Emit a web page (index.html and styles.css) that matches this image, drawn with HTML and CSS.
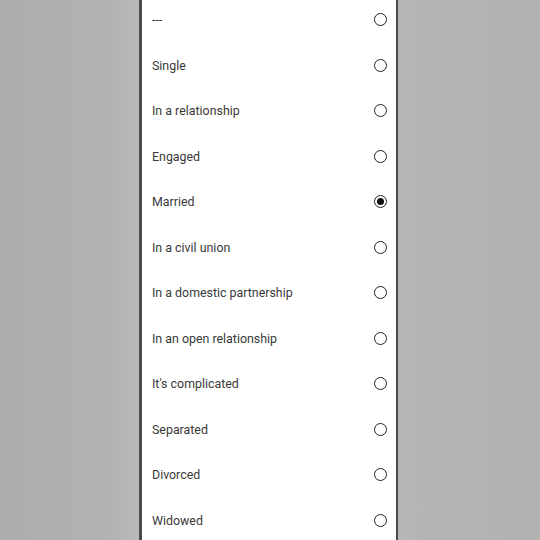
FILE: index.html
```html
<!DOCTYPE html>
<html lang="en">
<head>
    <meta charset="UTF-8">
    <meta name="viewport" content="width=device-width, initial-scale=1.0">
    <title>Relationship status</title>
    <link rel="stylesheet" href="styles.css">
</head>
<body>
    <div class="phone">
        <ul class="options">
            <li class="option"><span>---</span><span class="radio"></span></li>
            <li class="option"><span>Single</span><span class="radio"></span></li>
            <li class="option"><span>In a relationship</span><span class="radio"></span></li>
            <li class="option"><span>Engaged</span><span class="radio"></span></li>
            <li class="option"><span>Married</span><span class="radio checked"></span></li>
            <li class="option"><span>In a civil union</span><span class="radio"></span></li>
            <li class="option"><span>In a domestic partnership</span><span class="radio"></span></li>
            <li class="option"><span>In an open relationship</span><span class="radio"></span></li>
            <li class="option"><span>It's complicated</span><span class="radio"></span></li>
            <li class="option"><span>Separated</span><span class="radio"></span></li>
            <li class="option"><span>Divorced</span><span class="radio"></span></li>
            <li class="option"><span>Widowed</span><span class="radio"></span></li>
        </ul>
    </div>
</body>
</html>
```

FILE: styles.css
```css
html, body { height: 100%; }
body { margin: 0; overflow: hidden; font-family: Roboto, "Noto Sans", sans-serif; color: #3a3a3a; display: flex; justify-content: center;
  background: linear-gradient(to right, #adadad 0%, #b2b2b2 20%, #b9b9b9 26%, #b6b6b6 74%, #b4b4b4 80%, #b1b1b1 100%); }
.phone { width: 254px; height: 100%; background: #fff; border-left: 3px solid #4a4a4a; border-right: 2px solid #4a4a4a; margin-left: -3px; }
.options { list-style: none; margin: -3px 0 0; padding: 0; }
.option { height: 45.5px; display: flex; align-items: center; justify-content: space-between; padding: 0 9px 0 10px; font-size: 12.4px; }
.radio { width: 11px; height: 11px; border: 1.6px solid #222; border-radius: 50%; display: flex; align-items: center; justify-content: center; }
.radio.checked::after { content: ""; width: 7px; height: 7px; border-radius: 50%; background: #111; }
```
